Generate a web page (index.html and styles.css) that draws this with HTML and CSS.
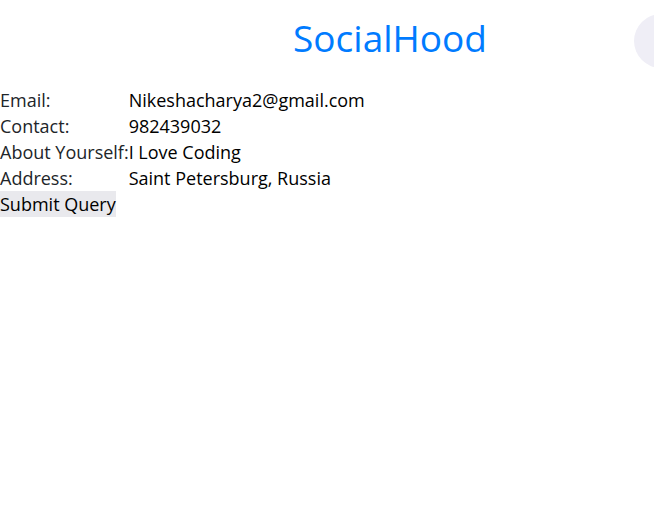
FILE: index.html
```html
<!DOCTYPE html>
<html lang="en">
<head>
<meta charset="utf-8">
<title>SocialHood</title>
<link rel="stylesheet" href="styles.css">
</head>
<body>
<header class="header">
  <a class="brand" href="#">SocialHood</a>
  <button class="avatar" type="button" aria-label="Profile"></button>
</header>
<form class="profile">
  <table class="fields">
    <tr><td><label for="email">Email:</label></td><td><input id="email" type="text" value="Nikeshacharya2@gmail.com"></td></tr>
    <tr><td><label for="contact">Contact:</label></td><td><input id="contact" type="text" value="982439032"></td></tr>
    <tr><td><label for="about">About Yourself:</label></td><td><input id="about" type="text" value="I Love Coding"></td></tr>
    <tr><td><label for="address">Address:</label></td><td><input id="address" type="text" value="Saint Petersburg, Russia"></td></tr>
  </table>
  <button class="submit" type="submit">Submit Query</button>
</form>
</body>
</html>
```
FILE: styles.css
```css
* {
  box-sizing: border-box;
}

body {
  margin: 0;
  background: #fff;
  color: #212529;
  font-family: "Segoe UI", "Open Sans", "Noto Sans", sans-serif;
  font-size: 18px;
  line-height: 26px;
}

.header {
  display: flex;
  align-items: flex-start;
  justify-content: flex-end;
  gap: 147px;
  overflow: hidden;
  padding: 14px 0 19px;
}

.brand {
  color: #007bff;
  font-size: 37px;
  line-height: 48px;
  text-decoration: none;
}

.avatar {
  flex: none;
  width: 54px;
  height: 54px;
  margin-right: -34px;
  padding: 0;
  border: 0;
  border-radius: 50%;
  background: #efeef6;
}

.fields {
  width: 100%;
  border-collapse: collapse;
}

.fields td {
  padding: 0;
}

.fields td:first-child {
  width: 128px;
  white-space: nowrap;
}

.fields input {
  display: block;
  width: 100%;
  height: 26px;
  padding: 0;
  border: 0;
  outline: 0;
  background: transparent;
  color: #000;
  font: inherit;
}

.submit {
  display: block;
  padding: 0;
  border: 0;
  background: #e9e9ed;
  color: #000;
  font: inherit;
}
```
